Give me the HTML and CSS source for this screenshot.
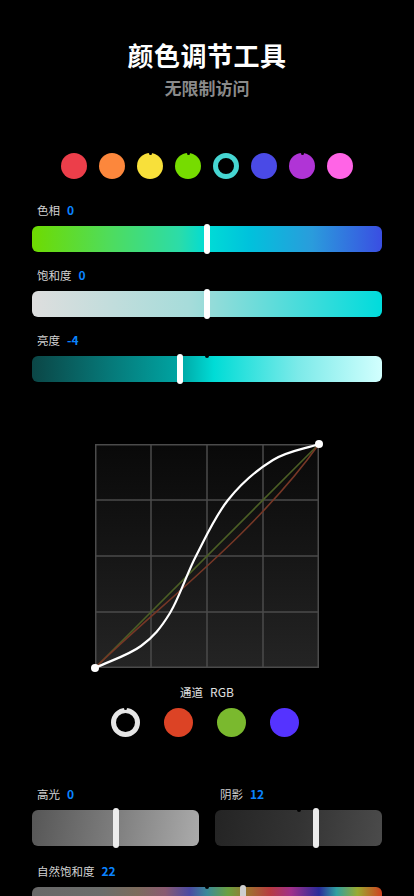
FILE: index.html
```html
<!DOCTYPE html>
<html lang="zh">
<head>
<meta charset="utf-8">
<title>颜色调节工具</title>
<link rel="stylesheet" href="styles.css">
</head>
<body>
<main class="page">
  <header class="header">
    <h1 class="title">颜色调节工具</h1>
    <p class="subtitle">无限制访问</p>
  </header>

  <div class="swatches">
    <span class="swatch red"></span>
    <span class="swatch orange"></span>
    <span class="swatch yellow notch"></span>
    <span class="swatch lime notch"></span>
    <span class="swatch cyan selected"></span>
    <span class="swatch blue"></span>
    <span class="swatch purple notch"></span>
    <span class="swatch pink"></span>
  </div>

  <section class="sliders">
    <div class="field">
      <div class="label">色相<span class="value">0</span></div>
      <div class="track hue"><span class="thumb" style="left:50%"></span></div>
    </div>
    <div class="field">
      <div class="label">饱和度<span class="value">0</span></div>
      <div class="track sat"><span class="thumb" style="left:50%"></span></div>
    </div>
    <div class="field">
      <div class="label">亮度<span class="value">-4</span></div>
      <div class="track bright"><span class="thumb" style="left:42.3%"></span></div>
    </div>
  </section>

  <section class="curves">
    <div class="curve-box">
      <svg class="curve-svg" viewBox="0 0 224 224" width="224" height="224">
        <g stroke="#4b4b4b" stroke-width="1.5" fill="none">
          <line x1="56" y1="0" x2="56" y2="224"/>
          <line x1="112" y1="0" x2="112" y2="224"/>
          <line x1="168" y1="0" x2="168" y2="224"/>
          <line x1="0" y1="56" x2="224" y2="56"/>
          <line x1="0" y1="112" x2="224" y2="112"/>
          <line x1="0" y1="168" x2="224" y2="168"/>
          <rect x="0.75" y="0.75" width="222.5" height="222.5"/>
        </g>
        <line x1="0" y1="224" x2="224" y2="0" stroke="#4b5e25" stroke-width="1.6"/>
        <path d="M0 224 C60 165 160 90 224 0" stroke="#763726" stroke-width="1.6" fill="none"/>
        <path d="M0 224 C15.3 216.7 33.5 211.2 46 202 C58.5 192.8 65.8 184 75 169 C84.2 154 91.3 130.8 101 112 C110.7 93.2 120.2 72 133 56 C145.8 40 162.8 25.3 178 16 C193.2 6.7 208.7 5.3 224 0" stroke="#ffffff" stroke-width="2.2" fill="none"/>
        <circle cx="0" cy="224" r="4" fill="#ffffff"/>
        <circle cx="224" cy="0" r="4" fill="#ffffff"/>
      </svg>
    </div>
    <div class="channel-label">通道<span class="channel-name">RGB</span></div>
    <div class="channels">
      <span class="chan rgb"></span>
      <span class="chan cr"></span>
      <span class="chan cg"></span>
      <span class="chan cb"></span>
    </div>
  </section>

  <section class="tones">
    <div class="field">
      <div class="label">高光<span class="value">0</span></div>
      <div class="track tall light"><span class="thumb tall-thumb" style="left:50.3%"></span></div>
    </div>
    <div class="field">
      <div class="label">阴影<span class="value">12</span></div>
      <div class="track tall dark marked"><span class="thumb tall-thumb" style="left:60.5%"></span></div>
    </div>
  </section>

  <section class="sliders vibrance">
    <div class="field">
      <div class="label">自然饱和度<span class="value">22</span></div>
      <div class="track spectrum marked"><span class="thumb grey-thumb" style="left:60.3%"></span></div>
    </div>
  </section>
</main>
</body>
</html>
```

FILE: styles.css
```css
* { box-sizing: border-box; }

html, body {
  margin: 0;
  padding: 0;
  background: #000;
}

body {
  font-family: "Noto Sans CJK SC", "Noto Sans", sans-serif;
  color: #fff;
  width: 414px;
  height: 896px;
  overflow: hidden;
}

.page {
  display: flex;
  flex-direction: column;
}

.header {
  display: flex;
  flex-direction: column;
  align-items: center;
  padding-top: 37px;
}

.title {
  margin: 0;
  font-size: 26px;
  line-height: 36px;
  font-weight: 700;
  letter-spacing: 0.5px;
  color: #fff;
}

.subtitle {
  margin: 4px 0 0;
  font-size: 17px;
  line-height: 22px;
  font-weight: 700;
  color: #8a8a8a;
}

.swatches {
  display: flex;
  justify-content: center;
  gap: 12px;
  margin-top: 54px;
}

.swatch {
  position: relative;
  width: 26px;
  height: 26px;
  border-radius: 50%;
}
.swatch.red { background: #ec3e4a; }
.swatch.orange { background: #fc873c; }
.swatch.yellow { background: #f8e03a; }
.swatch.lime { background: #76dc00; }
.swatch.cyan.selected { background: transparent; border: 5px solid #46d6d2; }
.swatch.blue { background: #4a4ae6; }
.swatch.purple { background: #b034d6; }
.swatch.pink { background: #ff64e6; }

.swatch.notch::after {
  content: "";
  position: absolute;
  left: 50%;
  top: -1px;
  width: 3px;
  height: 3px;
  margin-left: -1.5px;
  border-radius: 50%;
  background: #000;
}

.sliders {
  display: flex;
  flex-direction: column;
  gap: 15px;
  padding: 0 32px;
  margin-top: 23px;
}

.field {
  display: flex;
  flex-direction: column;
  gap: 8px;
}

.label {
  display: flex;
  align-items: center;
  gap: 7px;
  padding-left: 5px;
  font-size: 11.5px;
  line-height: 16px;
  color: #d2d2d2;
}

.value {
  color: #0a84ff;
  font-weight: 700;
  font-size: 12px;
}

.track {
  position: relative;
  height: 26px;
  border-radius: 6px;
}

.track::before {
  content: "";
  position: absolute;
  left: 50%;
  top: -2px;
  width: 4px;
  height: 4px;
  margin-left: -2px;
  border-radius: 50%;
  background: #000;
}

.hue {
  background: linear-gradient(90deg, #6edb00 0%, #4fdc5c 22%, #2cdca8 42%, #00dcd6 50%, #00c2dc 62%, #2a9cdc 80%, #3a4ee2 100%);
}

.sat {
  background: linear-gradient(90deg, #dedede 0%, #a6dcda 45%, #92dcd9 52%, #00dcdc 100%);
}

.bright {
  background: linear-gradient(90deg, #0b4646 0%, #067878 22%, #00a4a2 42%, #00dcd6 52%, #7ceae9 76%, #d2fffe 100%);
}

.thumb {
  position: absolute;
  top: -2px;
  bottom: -2px;
  width: 6px;
  margin-left: -3px;
  border-radius: 3px;
  background: #fff;
  z-index: 1;
}

.curves {
  display: flex;
  flex-direction: column;
  align-items: center;
  margin-top: 62px;
}

.curve-box {
  width: 224px;
  height: 224px;
  background: linear-gradient(180deg, #090909 0%, #161616 50%, #242424 100%);
}

.curve-svg {
  display: block;
  overflow: visible;
}

.channel-label {
  display: flex;
  gap: 7px;
  margin-top: 16px;
  font-size: 11.5px;
  line-height: 16px;
  color: #e0e0e0;
}

.channel-name { font-size: 12px; }

.channels {
  display: flex;
  gap: 24px;
  margin-top: 8px;
  padding-right: 4px;
}

.chan {
  position: relative;
  width: 29px;
  height: 29px;
  border-radius: 50%;
}
.chan.rgb { border: 5px solid #e6e6e6; }
.chan.rgb::after {
  content: "";
  position: absolute;
  left: 50%;
  top: -6px;
  width: 3px;
  height: 3px;
  margin-left: -1.5px;
  background: #000;
  border-radius: 50%;
}
.chan.cr { background: #dc4325; }
.chan.cg { background: #7ab92e; }
.chan.cb { background: #5533ff; }

.tones {
  display: grid;
  grid-template-columns: 1fr 1fr;
  gap: 16px;
  padding: 0 32px;
  margin-top: 49px;
}

.track.tall { height: 36px; }
.track.tall::before { display: none; }
.track.marked::before { display: block; }

.light {
  background: linear-gradient(100deg, #565656 0%, #7e7e7e 50%, #ababab 100%);
}
.dark {
  background: linear-gradient(100deg, #242424 0%, #333 50%, #4b4b4b 100%);
}

.tall-thumb { background: #ececec; }

.vibrance { margin-top: 17px; }

.spectrum {
  background: linear-gradient(90deg, #686868 0%, #6b6d6b 20%, #7c6b5c 30%, #8a5a70 38%, #4c4aa2 45%, #3a8a9a 50%, #6aa040 56%, #a07030 62%, #b83a40 68%, #a0308a 74%, #2a2a9a 82%, #30a0a0 87%, #9aaa30 93%, #d04020 100%);
}

.grey-thumb { background: #cfcfcf; }
```
